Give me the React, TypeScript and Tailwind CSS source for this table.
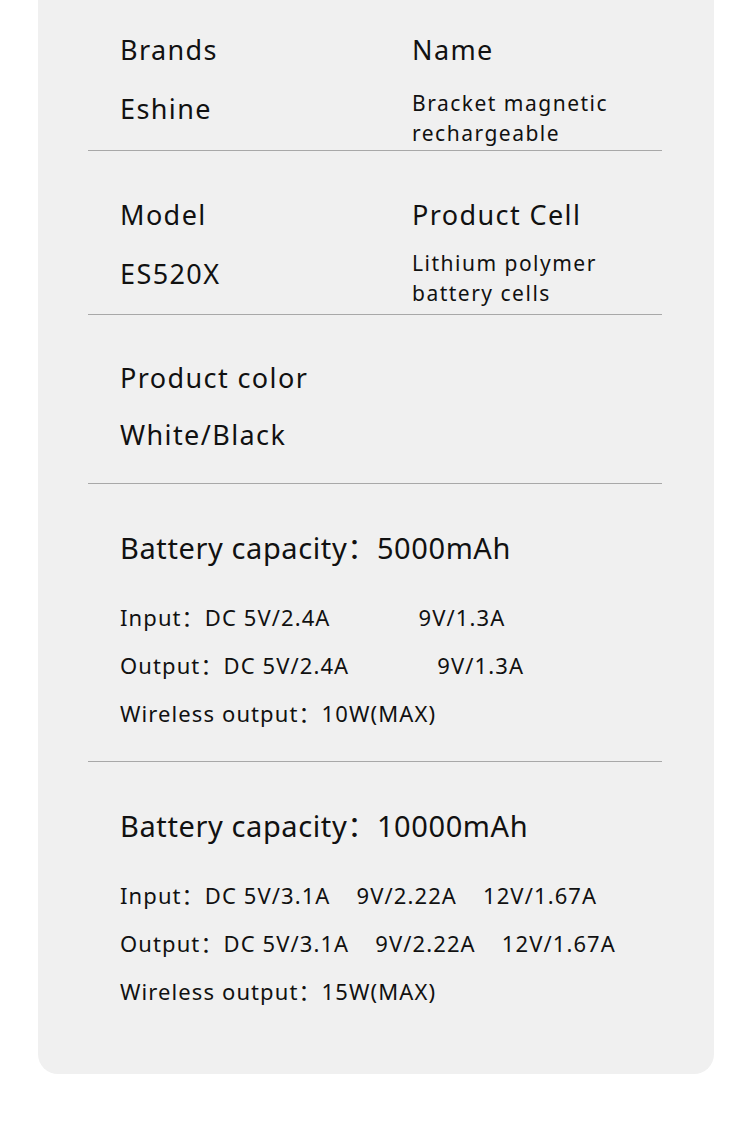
import React from "react";

const font = { fontFamily: '"Noto Sans", "Noto Sans CJK SC", sans-serif' };

// two-column spec block (label over value)
function Pair({ label, value }: { label: string; value: string }) {
  return (
    <div className="flex flex-col">
      <div className="text-[27px] leading-[36px] tracking-[1.4px] text-[#111]">{label}</div>
      <div className="mt-[23px] text-[27px] leading-[36px] tracking-[1.4px] text-[#111]">{value}</div>
    </div>
  );
}

function Capacity({
  capacity,
  input,
  output,
  wireless,
  gap,
}: {
  capacity: string;
  input: string[];
  output: string[];
  wireless: string;
  gap: string;
}) {
  return (
    <div className="flex flex-col text-[#111]">
      <div className="text-[29px] leading-[40px] tracking-[0.6px]">Battery capacity：{capacity}</div>
      <div className="mt-[34px] flex flex-col gap-[18px] text-[22px] leading-[30px] tracking-[1.1px]">
        <div className="flex">
          <span>Input：{input[0]}</span>
          {input.slice(1).map((v) => (
            <span key={v} className={gap}>
              {v}
            </span>
          ))}
        </div>
        <div className="flex">
          <span>Output：{output[0]}</span>
          {output.slice(1).map((v) => (
            <span key={v} className={gap}>
              {v}
            </span>
          ))}
        </div>
        <div>Wireless output：{wireless}</div>
      </div>
    </div>
  );
}

export default function App() {
  return (
    <div className="min-h-[1137px] bg-white" style={font}>
      <div className="ml-[38px] w-[676px] rounded-b-[20px] bg-[#f0f0f0] pb-[68px] pl-[50px] pr-[52px]">
        {/* Brands / Name */}
        <div className="grid grid-cols-[292px_1fr] border-b border-[#a8a8a8] pb-[2px] pl-[32px] pt-[32px]">
          <Pair label="Brands" value="Eshine" />
          <div className="flex flex-col">
            <div className="text-[27px] leading-[36px] tracking-[1.4px] text-[#111]">Name</div>
            <div className="mt-[20px] text-[21px] leading-[30px] tracking-[1.5px] text-[#111]">
              Bracket magnetic
              <br />
              rechargeable
            </div>
          </div>
        </div>

        {/* Model / Product Cell */}
        <div className="grid grid-cols-[292px_1fr] border-b border-[#a8a8a8] pb-[6px] pl-[32px] pt-[46px]">
          <Pair label="Model" value="ES520X" />
          <div className="flex flex-col">
            <div className="text-[27px] leading-[36px] tracking-[1.4px] text-[#111]">Product Cell</div>
            <div className="mt-[15px] text-[21px] leading-[30px] tracking-[1.5px] text-[#111]">
              Lithium polymer
              <br />
              battery cells
            </div>
          </div>
        </div>

        {/* Product color */}
        <div className="border-b border-[#a8a8a8] pb-[30px] pl-[32px] pt-[45px]">
          <div className="text-[27px] leading-[36px] tracking-[1.4px] text-[#111]">Product color</div>
          <div className="mt-[21px] text-[27px] leading-[36px] tracking-[1.4px] text-[#111]">White/Black</div>
        </div>

        {/* 5000mAh */}
        <div className="border-b border-[#a8a8a8] pb-[33px] pl-[32px] pt-[44px]">
          <Capacity
            capacity="5000mAh"
            input={["DC 5V/2.4A", "9V/1.3A"]}
            output={["DC 5V/2.4A", "9V/1.3A"]}
            wireless="10W(MAX)"
            gap="ml-[88px]"
          />
        </div>

        {/* 10000mAh */}
        <div className="pl-[32px] pt-[44px]">
          <Capacity
            capacity="10000mAh"
            input={["DC 5V/3.1A", "9V/2.22A", "12V/1.67A"]}
            output={["DC 5V/3.1A", "9V/2.22A", "12V/1.67A"]}
            wireless="15W(MAX)"
            gap="ml-[26px]"
          />
        </div>
      </div>
    </div>
  );
}
